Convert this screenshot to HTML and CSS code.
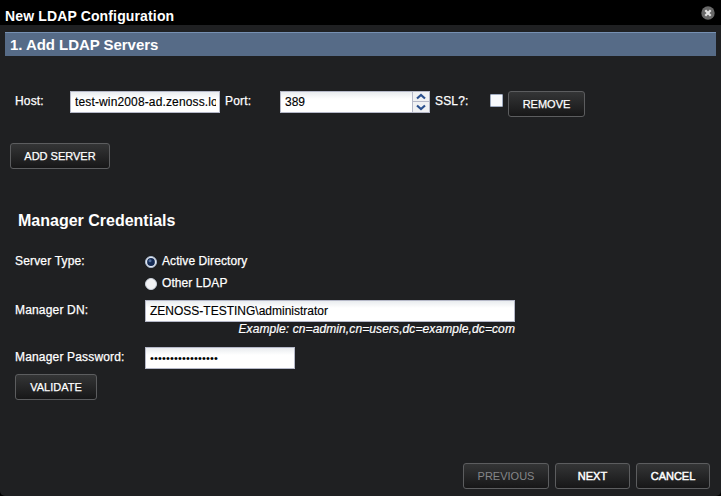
FILE: index.html
```html
<!DOCTYPE html>
<html lang="en">
<head>
<meta charset="utf-8">
<title>New LDAP Configuration</title>
<link rel="stylesheet" href="styles.css">
</head>
<body>
<div class="window">
  <header class="titlebar">
    <span class="title">New LDAP Configuration</span>
    <svg class="close" width="14" height="14" viewBox="0 0 14 14"><circle cx="7" cy="7" r="6.7" fill="#686868"/><path d="M4.3 4.3l5.4 5.4M9.7 4.3L4.3 9.7" stroke="#e4e4e4" stroke-width="2.2"/></svg>
  </header>
  <main class="content">
    <h1 class="step"><span>1. Add LDAP Servers</span></h1>
    <div class="server">
      <label class="host-label">Host:</label>
      <div class="field host"><span class="clip">test-win2008-ad.zenoss.lo</span></div>
      <label class="port-label">Port:</label>
      <div class="field port"><span>389</span></div>
      <div class="spinner">
        <svg width="16" height="9" viewBox="0 0 16 9"><path d="M4 6.5L8 3L12 6.5" fill="none" stroke="#2b508e" stroke-width="2.2"/></svg>
        <svg width="16" height="10" viewBox="0 0 16 10"><path d="M4 3.5L8 7L12 3.5" fill="none" stroke="#2b508e" stroke-width="2.2"/></svg>
      </div>
      <label class="ssl-label">SSL?:</label>
      <span class="checkbox"></span>
      <button class="btn remove">REMOVE</button>
    </div>
    <button class="btn add">ADD SERVER</button>
    <h2 class="section">Manager Credentials</h2>
    <div class="row type">
      <label>Server Type:</label>
      <div class="options">
        <div class="option"><svg width="12" height="12" viewBox="0 0 12 12"><circle cx="6" cy="6" r="5.5" fill="#e9eef5" stroke="#a9b9cf"/><circle cx="6" cy="6" r="3.9" fill="#142b55"/><circle cx="5" cy="4.8" r="1.5" fill="#526f9b"/></svg><span class="active">Active Directory</span></div>
        <div class="option"><svg width="12" height="12" viewBox="0 0 12 12"><circle cx="6" cy="6" r="5.5" fill="#f2f3f5" stroke="#cbd2dc"/></svg><span>Other LDAP</span></div>
      </div>
    </div>
    <div class="row dn">
      <label class="dn-label">Manager DN:</label>
      <div class="dn-column"><div class="field"><span class="dn-value">ZENOSS-TESTING\administrator</span></div><em>Example: cn=admin,cn=users,dc=example,dc=com</em></div>
    </div>
    <div class="row password">
      <label class="pass-label">Manager Password:</label>
      <div class="field"><span class="dots">•••••••••••••••••</span></div>
    </div>
    <button class="btn validate">VALIDATE</button>
  </main>
  <footer class="actions">
    <button class="btn previous" disabled>PREVIOUS</button>
    <button class="btn next">NEXT</button>
    <button class="btn cancel">CANCEL</button>
  </footer>
</div>
</body>
</html>
```
FILE: styles.css
```css
* { box-sizing: border-box; }
body { margin: 0; background: #000; color: #fff; font: 12px/16px "Liberation Sans", Arial, sans-serif; }
.window { width: 721px; height: 496px; display: flex; flex-direction: column; background: #1f2022; border-radius: 0 0 5px 5px; overflow: hidden; }
.titlebar { height: 25px; flex: none; background: #000; display: flex; justify-content: space-between; padding: 6px 6px 0 5px; }
.title { font-size: 14px; line-height: 20px; font-weight: bold; white-space: nowrap; letter-spacing: .14px; }
.content { flex: 1; padding: 7px 5px 0; }
.step { margin: 0; height: 24px; padding-left: 5px; border-top: 1px solid #7690b2; background: #566b87; font-size: 15px; line-height: 24px; letter-spacing: -.05px; }
.server { display: flex; height: 26px; margin-top: 35px; padding-left: 10px; }
label { flex: none; line-height: 20px; white-space: nowrap; letter-spacing: .17px; -webkit-text-stroke: .25px #fff; }
.host-label { width: 55px; }
.port-label { width: 60px; padding-left: 5px; }
.ssl-label { width: 60px; padding-left: 5px; }
.field { height: 22px; border: 1px solid #b5b8c8; background: linear-gradient(#e9ecef, #fff 7px); color: #000; padding: 0 3px 0 4px; line-height: 21px; white-space: nowrap; -webkit-text-stroke: .15px #000; }
.host { width: 150px; }
.clip { display: block; overflow: hidden; letter-spacing: .14px; }
.port { width: 133px; }
.spinner { width: 17px; height: 22px; display: grid; grid-template-rows: 9px 10px; gap: 1px; background: #b5b8c8; padding: 1px 1px 1px 0; }
.spinner svg { display: block; background: #f0f1f3; }
.checkbox { width: 13px; height: 13px; margin-top: 3px; border: 1px solid #9fabc0; border-radius: 1px; background: #f7f9fc; }
.btn { display: block; height: 26px; padding: 0; border: 1px solid #5c5d5f; border-radius: 3px; background: linear-gradient(#343536, #171718); color: #fff; font: 11px/24px "Liberation Sans", Arial, sans-serif; white-space: nowrap; -webkit-text-stroke: .25px #fff; }
.remove { width: 77px; margin-left: 5px; }
.add { width: 100px; margin: 26px 0 0 5px; }
.section { margin: 42px 0 0 13px; font-size: 16px; line-height: 20px; height: 20px; }
.row { display: flex; margin-left: 10px; }
.row > label { width: 130px; }
.type { margin-top: 20px; height: 49px; }
.options { display: grid; grid-template-rows: 22px 22px; }
.option { display: flex; align-items: center; gap: 5px; height: 20px; letter-spacing: .08px; -webkit-text-stroke: .25px #fff; }
.option svg { margin-top: 2px; }
.dn { height: 47px; }
.dn-column { width: 370px; display: flex; flex-direction: column; }
.dn-column em { align-self: flex-end; line-height: 15px; white-space: nowrap; letter-spacing: .1px; -webkit-text-stroke: .2px #fff; }
.password .field { width: 150px; }
.dots { font-size: 11px; letter-spacing: .15px; -webkit-text-stroke: 0; }
.validate { width: 82px; margin: 5px 0 0 10px; }
.actions { height: 33px; display: flex; justify-content: flex-end; gap: 6px; padding-right: 11px; }
.previous { width: 86px; color: #858688; -webkit-text-stroke: 0; }
.next { width: 75px; -webkit-text-stroke: .45px #fff; }
.cancel { width: 74px; -webkit-text-stroke: .45px #fff; }
```
